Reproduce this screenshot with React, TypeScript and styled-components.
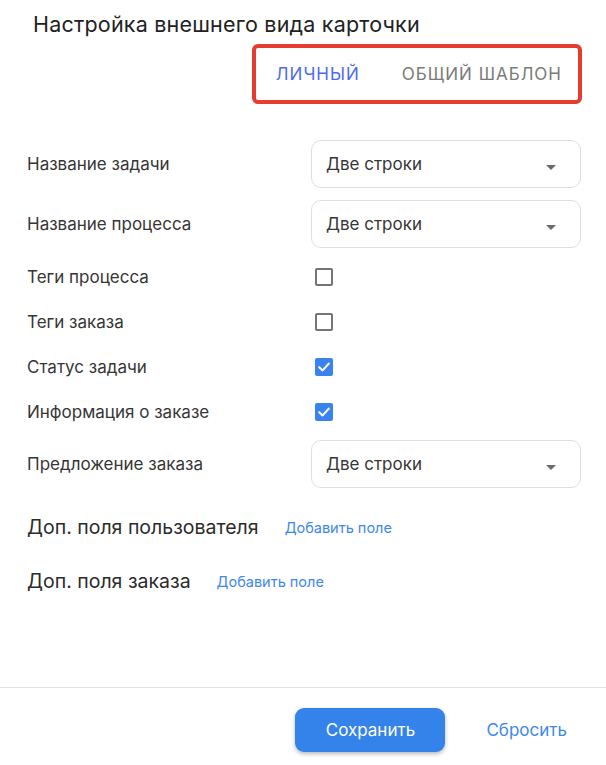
import styled, { createGlobalStyle } from 'styled-components'

const GlobalStyle = createGlobalStyle`
  html, body {
    margin: 0;
    padding: 0;
    background: #fff;
  }
  body {
    font-family: Inter, "Noto Sans", "Liberation Sans", sans-serif;
    color: #2b2b2b;
  }
  * {
    box-sizing: border-box;
  }
`

const Page = styled.div`
  min-height: 100vh;
  display: flex;
  flex-direction: column;
`

const Content = styled.div`
  flex: 1;
  padding: 11px 25px 0 27px;
`

const Title = styled.h1`
  margin: 0 0 0 6px;
  font-size: 21.5px;
  line-height: 26px;
  letter-spacing: 0.2px;
  font-weight: 400;
  color: #222;
`

const TabsRow = styled.div`
  display: flex;
  justify-content: flex-end;
  margin-top: 7px;
`

const TabsFrame = styled.div`
  display: flex;
  align-items: center;
  gap: 42px;
  height: 60px;
  padding: 0 16px 0 20px;
  border: 4px solid #e53b30;
  border-radius: 6px;
  margin-right: -1px;
`

const Tab = styled.button<{ $active?: boolean }>`
  border: none;
  background: none;
  padding: 0;
  font-family: inherit;
  font-size: 17px;
  letter-spacing: 1px;
  text-transform: uppercase;
  color: ${({ $active }) => ($active ? '#4b6bf0' : '#7a7a7a')};
  cursor: pointer;
`

const Form = styled.div`
  display: flex;
  flex-direction: column;
  margin-top: 36px;
`

const Row = styled.div<{ $tall?: boolean }>`
  display: grid;
  grid-template-columns: 284px 1fr;
  align-items: center;
  height: ${({ $tall }) => ($tall ? '48px' : '33px')};
  margin-bottom: 12px;
`

const Label = styled.span`
  font-size: 17px;
  color: #363636;
`

const Select = styled.div`
  display: flex;
  align-items: center;
  justify-content: space-between;
  height: 48px;
  padding: 0 24px 0 14px;
  border: 1px solid #dedede;
  border-radius: 10px;
  font-size: 17px;
  color: #363636;
`

const Caret = styled.span`
  width: 0;
  height: 0;
  border-left: 5px solid transparent;
  border-right: 5px solid transparent;
  border-top: 5px solid #6b6b6b;
  margin-top: 6px;
`

const Box = styled.span<{ $checked?: boolean }>`
  display: flex;
  align-items: center;
  justify-content: center;
  width: 18px;
  height: 18px;
  margin-left: 4px;
  border-radius: 2px;
  border: 2px solid ${({ $checked }) => ($checked ? '#3a83ee' : '#757575')};
  background: ${({ $checked }) => ($checked ? '#3a83ee' : '#fff')};
`

const Section = styled.div`
  display: flex;
  align-items: center;
  height: 30px;
  margin-top: 12px;
  margin-bottom: 24px;
`

const SectionTitle = styled.span`
  font-size: 19.5px;
  color: #2b2b2b;
`

const AddLink = styled.a<{ $gap: number }>`
  margin-left: ${({ $gap }) => $gap}px;
  font-size: 14.5px;
  color: #3d87f0;
  cursor: pointer;
`

const Footer = styled.div`
  display: flex;
  justify-content: flex-end;
  align-items: center;
  gap: 41px;
  padding: 20px 39px 13px 0;
  border-top: 1px solid #e2e2e2;
`

const SaveButton = styled.button`
  width: 150px;
  height: 44px;
  border: none;
  border-radius: 9px;
  background: #3483ea;
  color: #fff;
  font-family: inherit;
  font-size: 17px;
  box-shadow: 0 2px 4px rgba(0, 0, 0, 0.28);
  cursor: pointer;
`

const ResetButton = styled.button`
  border: none;
  background: none;
  padding: 0;
  font-family: inherit;
  font-size: 17px;
  color: #3d87f0;
  cursor: pointer;
`

function Check({ checked }: { checked?: boolean }) {
  return (
    <Box $checked={checked}>
      {checked && (
        <svg width="14" height="14" viewBox="0 0 14 14">
          <path
            d="M2.2 7.2 L5.6 10.4 L11.8 3.6"
            fill="none"
            stroke="#fff"
            strokeWidth="2.1"
            strokeLinecap="round"
            strokeLinejoin="round"
          />
        </svg>
      )}
    </Box>
  )
}

const fields = [
  { label: 'Название задачи', kind: 'select' },
  { label: 'Название процесса', kind: 'select' },
  { label: 'Теги процесса', kind: 'check', checked: false },
  { label: 'Теги заказа', kind: 'check', checked: false },
  { label: 'Статус задачи', kind: 'check', checked: true },
  { label: 'Информация о заказе', kind: 'check', checked: true },
  { label: 'Предложение заказа', kind: 'select' }
]

export default function App() {
  return (
    <>
      <GlobalStyle />
      <Page>
        <Content>
          <Title>Настройка внешнего вида карточки</Title>
          <TabsRow>
            <TabsFrame>
              <Tab $active>Личный</Tab>
              <Tab>Общий шаблон</Tab>
            </TabsFrame>
          </TabsRow>

          <Form>
            {fields.map((f) => (
              <Row key={f.label} $tall={f.kind === 'select'}>
                <Label>{f.label}</Label>
                {f.kind === 'select' ? (
                  <Select>
                    Две строки
                    <Caret />
                  </Select>
                ) : (
                  <Check checked={f.checked} />
                )}
              </Row>
            ))}
          </Form>

          <Section>
            <SectionTitle>Доп. поля пользователя</SectionTitle>
            <AddLink $gap={26}>Добавить поле</AddLink>
          </Section>
          <Section>
            <SectionTitle>Доп. поля заказа</SectionTitle>
            <AddLink $gap={26}>Добавить поле</AddLink>
          </Section>
        </Content>

        <Footer>
          <SaveButton>Сохранить</SaveButton>
          <ResetButton>Сбросить</ResetButton>
        </Footer>
      </Page>
    </>
  )
}
